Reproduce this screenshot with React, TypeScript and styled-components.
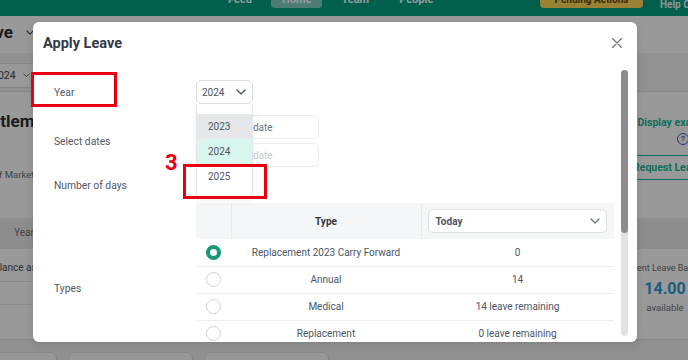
import React from "react";
import styled, { createGlobalStyle } from "styled-components";

const GlobalStyle = createGlobalStyle`
  html, body { margin: 0; padding: 0; }
  body { font-family: Roboto, "Liberation Sans", Arial, sans-serif; background: #fff; }
  * { box-sizing: border-box; }
`;

const Screen = styled.div`
  position: relative;
  width: 688px;
  height: 360px;
  overflow: hidden;
  background: #fff;
`;

/* ---------- background page ---------- */
const Page = styled.div`
  display: flex;
  flex-direction: column;
  width: 688px;
  height: 360px;
`;

const TopNav = styled.header`
  height: 33px;
  margin-top: -17px;
  flex-shrink: 0;
  background: #00a07f;
  display: flex;
  align-items: center;
  padding-left: 217px;
  color: #fff;
`;

const NavItem = styled.div<{ $active?: boolean }>`
  height: 16px;
  padding: 0 11px;
  margin-right: 8px;
  border-radius: 4px;
  font-size: 11px;
  font-weight: 700;
  line-height: 16px;
  background: ${(p) => (p.$active ? "rgba(255,255,255,0.5)" : "transparent")};
`;

const GoldButton = styled.div`
  margin-left: auto;
  width: 103px;
  height: 16px;
  border-radius: 4px;
  background: #ffd95a;
  color: #5a4a10;
  font-size: 10px;
  font-weight: 700;
  line-height: 16px;
  text-align: center;
`;

const HelpLink = styled.div`
  align-self: flex-end;
  width: 28px;
  margin-left: 17px;
  padding-bottom: 6px;
  font-size: 10px;
  font-weight: 700;
  line-height: 10px;
  white-space: nowrap;
  color: #eef7f4;
`;

const Row = styled.div<{ $h: number; $bg?: string; $line?: boolean }>`
  height: ${(p) => p.$h}px;
  flex-shrink: 0;
  display: flex;
  justify-content: space-between;
  background: ${(p) => p.$bg || "#fff"};
  border-bottom: ${(p) => (p.$line ? "1px solid #e2e2e2" : "none")};
`;

const LeftCol = styled.div<{ $pl?: number; $pt?: number }>`
  margin-left: -29px;
  width: 220px;
  padding-left: ${(p) => p.$pl || 0}px;
  padding-top: ${(p) => p.$pt || 0}px;
  display: flex;
  flex-direction: column;
  white-space: nowrap;
`;

const RightCol = styled.div<{ $pt?: number; $mr?: number }>`
  width: 112px;
  margin-right: ${(p) => -(p.$mr ?? 44)}px;
  padding-top: ${(p) => p.$pt || 0}px;
  display: flex;
  flex-direction: column;
  align-items: center;
  white-space: nowrap;
`;

const PageTitle = styled.div`
  display: flex;
  align-items: center;
  gap: 13px;
  padding: 6px 0 0 0;
  margin-left: -3px;
  font-size: 17px;
  font-weight: 700;
  color: #2b2f36;
`;

const GhostSelect = styled.div`
  margin: 10px 0 0 12px;
  width: 55px;
  height: 25px;
  border: 1px solid #dcdcdc;
  border-radius: 4px;
  background: #fff;
  display: flex;
  align-items: center;
  justify-content: space-between;
  padding: 0 7px 0 8px;
  font-size: 10.5px;
  color: #444;
`;

const SectionTitle = styled.div`
  font-size: 17px;
  font-weight: 700;
  line-height: 20px;
  color: #2b2f36;
`;

const Muted = styled.div<{ $mt?: number; $ml?: number; $size?: number }>`
  margin-top: ${(p) => p.$mt || 0}px;
  margin-left: ${(p) => p.$ml || 0}px;
  font-size: ${(p) => p.$size || 10}px;
  line-height: 12px;
  color: #6b6f76;
`;

const TealLink = styled.div`
  font-size: 10.5px;
  font-weight: 700;
  line-height: 13px;
  color: #18b894;
`;

const HelpDot = styled.span`
  margin-top: 4px;
  margin-left: 14px;
  width: 12px;
  height: 12px;
  border: 1.5px solid #4a5bd0;
  border-radius: 50%;
  font-size: 8px;
  font-weight: 700;
  line-height: 9px;
  text-align: center;
  color: #4a5bd0;
`;

const OutlineButton = styled.div`
  margin-top: 10px;
  align-self: stretch;
  height: 25px;
  border: 1px solid #18b894;
  border-radius: 4px;
  display: flex;
  align-items: center;
  padding-left: 12px;
  font-size: 10.5px;
  font-weight: 700;
  color: #18b894;
`;

const BalanceCell = styled.div<{ $h: number }>`
  height: ${(p) => p.$h}px;
  border-bottom: 1px solid #e4e4e4;
  padding: 13px 0 0 17px;
  font-size: 10px;
  color: #4a4f57;
`;

const BigNumber = styled.div`
  margin-top: 5px;
  font-size: 16px;
  font-weight: 700;
  line-height: 20px;
  color: #2a9bd8;
`;

const CardsRow = styled.div`
  flex: 1;
  background: #f0f0f0;
  display: flex;
  gap: 11px;
  padding-top: 12px;
  margin-left: -68px;
`;

const GhostCard = styled.div`
  width: 125px;
  height: 40px;
  border: 1px solid #e0e0e0;
  border-radius: 6px;
  background: #fbfbfb;
  flex-shrink: 0;
`;

const Overlay = styled.div`
  position: absolute;
  inset: 0;
  background: rgba(0, 0, 0, 0.4);
`;

/* ---------- modal ---------- */
const Modal = styled.div`
  position: absolute;
  left: 33px;
  top: 22px;
  width: 604px;
  height: 320px;
  background: #fff;
  border-radius: 6px;
  display: flex;
  flex-direction: column;
  overflow: hidden;
  box-shadow: 0 2px 10px rgba(0, 0, 0, 0.12);
`;

const ModalHeader = styled.div`
  height: 42px;
  flex-shrink: 0;
  display: flex;
  align-items: center;
  justify-content: space-between;
  padding: 0 15px 0 10px;
`;

const Title = styled.h2`
  margin: 0;
  font-size: 14.5px;
  font-weight: 700;
  color: #343a46;
`;

const CloseButton = styled.button`
  border: 0;
  background: none;
  padding: 0;
  width: 10px;
  height: 10px;
  display: flex;
  color: #6b7280;
`;

const ModalBody = styled.div`
  flex: 1;
  min-height: 0;
  display: flex;
`;

const ScrollArea = styled.div`
  flex: 1;
  overflow: hidden;
  padding: 16px 0 0 21px;
`;

const ScrollTrack = styled.div`
  width: 7px;
  margin: 6px 9px 6px 7px;
  border-radius: 4px;
  background: #e2e2e2;
  display: flex;
  flex-direction: column;
`;

const ScrollThumb = styled.div`
  height: 163px;
  border-radius: 4px;
  background: #8c8c8c;
`;

const FormGrid = styled.div`
  display: grid;
  grid-template-columns: 142px 418px;
  row-gap: 11px;
  align-items: center;
`;

const Label = styled.div`
  font-size: 10.3px;
  color: #4f5866;
`;

const Field = styled.div<{ $h?: number }>`
  position: relative;
  min-height: ${(p) => p.$h || 0}px;
`;

const SelectBox = styled.div<{ $w?: number }>`
  width: ${(p) => (p.$w ? `${p.$w}px` : "100%")};
  height: 24px;
  border: 1px solid #dcdfe4;
  border-radius: 5px;
  background: #fff;
  display: flex;
  align-items: center;
  justify-content: space-between;
  padding: 0 6px 0 5px;
  font-size: 10px;
  color: #4b5563;
`;

const Menu = styled.div`
  position: absolute;
  top: 24px;
  left: 0;
  width: 57px;
  z-index: 2;
  background: #fff;
  border: 1px solid #e3e5e8;
  border-top: none;
  border-radius: 0 0 5px 5px;
  padding: 10px 0 8px;
  box-shadow: 0 3px 6px rgba(0, 0, 0, 0.06);
`;

const MenuOption = styled.div<{ $state?: "hover" | "selected" }>`
  height: 25px;
  line-height: 25px;
  padding-left: 11px;
  font-size: 10px;
  color: #4b5563;
  background: ${(p) =>
    p.$state === "hover" ? "#e5e7ea" : p.$state === "selected" ? "#d8f5ee" : "#fff"};
`;

const DateStack = styled.div`
  display: flex;
  flex-direction: column;
  gap: 4px;
`;

const DateInput = styled.div<{ $muted?: boolean }>`
  width: 123px;
  height: 24px;
  border: 1px solid #ececec;
  border-radius: 5px;
  padding-left: 26px;
  display: flex;
  align-items: center;
  font-size: 10px;
  color: ${(p) => (p.$muted ? "#c3c7cd" : "#6b7280")};
`;

const Table = styled.table`
  width: 418px;
  border-collapse: collapse;
  font-size: 10px;
  color: #4b5563;
`;

const HeadCell = styled.th<{ $w?: number; $divider?: boolean }>`
  height: 36px;
  padding: 0;
  width: ${(p) => (p.$w ? `${p.$w}px` : "auto")};
  background: #f5f6f7;
  border-left: ${(p) => (p.$divider ? "1px solid #e7e9ec" : "none")};
  font-weight: 700;
  color: #30353d;
  text-align: center;
`;

const HeadSelectWrap = styled.div`
  padding: 0 7px 0 6px;
`;

const Cell = styled.td`
  height: 27px;
  padding: 0;
  border-bottom: 1px solid #eceef1;
  text-align: center;
  vertical-align: middle;
`;

const Radio = styled.span<{ $checked?: boolean }>`
  display: inline-block;
  vertical-align: middle;
  width: 15px;
  height: 15px;
  border-radius: 50%;
  border: ${(p) => (p.$checked ? "4px solid #16987a" : "1.5px solid #cfd3d8")};
  background: #fff;
`;

/* ---------- annotations ---------- */
const RedBox = styled.div<{ $x: number; $y: number; $w: number; $h: number }>`
  position: absolute;
  left: ${(p) => p.$x}px;
  top: ${(p) => p.$y}px;
  width: ${(p) => p.$w}px;
  height: ${(p) => p.$h}px;
  border: 3px solid #e60012;
  z-index: 5;
`;

const StepNumber = styled.div`
  position: absolute;
  left: 165px;
  top: 152px;
  font-size: 22px;
  font-weight: 700;
  line-height: 22px;
  color: #e60012;
  z-index: 5;
`;

const Chevron = ({ w = 10, color = "currentColor" }: { w?: number; color?: string }) => (
  <svg width={w} height={w / 2 + 1} viewBox="0 0 10 6" fill="none">
    <polyline points="1,1 5,5 9,1" stroke={color} strokeWidth="1.3" strokeLinecap="round" strokeLinejoin="round" />
  </svg>
);

const rows = [
  { type: "Replacement 2023 Carry Forward", value: "0", checked: true },
  { type: "Annual", value: "14" },
  { type: "Medical", value: "14 leave remaining" },
  { type: "Replacement", value: "0 leave remaining" },
  { type: "Unpaid", value: "Unlimited" },
];

export default function App() {
  return (
    <Screen>
      <GlobalStyle />
      <Page>
        <TopNav>
          <NavItem>Feed</NavItem>
          <NavItem $active>Home</NavItem>
          <NavItem>Team</NavItem>
          <NavItem>People</NavItem>
          <GoldButton>Pending Actions</GoldButton>
          <HelpLink>Help Center</HelpLink>
        </TopNav>
        <Row $h={37}>
          <LeftCol>
            <PageTitle>
              Leave <Chevron w={8} color="#444" />
            </PageTitle>
          </LeftCol>
        </Row>
        <Row $h={39} $bg="#f2f2f2" $line>
          <LeftCol>
            <GhostSelect>
              2024 <Chevron w={7} color="#555" />
            </GhostSelect>
          </LeftCol>
        </Row>
        <Row $h={126}>
          <LeftCol $pt={19}>
            <SectionTitle>Entitlement</SectionTitle>
            <Muted $mt={38} $ml={-2} $size={9.5}>Head of Marketing</Muted>
          </LeftCol>
          <RightCol $pt={24}>
            <TealLink>Display example</TealLink>
            <HelpDot>?</HelpDot>
            <OutlineButton>Request Leave</OutlineButton>
          </RightCol>
        </Row>
        <Row $h={31} $bg="#ebebeb">
          <LeftCol $pl={43} $pt={9}>
            <Muted>Year</Muted>
          </LeftCol>
        </Row>
        <Row $h={91} $line>
          <LeftCol>
            <BalanceCell $h={33}>Balance as at today</BalanceCell>
            <BalanceCell $h={23} />
          </LeftCol>
          <RightCol $pt={13} $mr={33}>
            <Muted $size={9}>Current Leave Balance</Muted>
            <BigNumber>14.00</BigNumber>
            <Muted $mt={3} $size={9.5}>available</Muted>
          </RightCol>
        </Row>
        <CardsRow>
          <GhostCard />
          <GhostCard />
          <GhostCard />
        </CardsRow>
      </Page>

      <Overlay />

      <Modal>
        <ModalHeader>
          <Title>Apply Leave</Title>
          <CloseButton aria-label="Close">
            <svg width="10" height="10" viewBox="0 0 10 10">
              <path d="M0.5 0.5 L9.5 9.5 M9.5 0.5 L0.5 9.5" stroke="currentColor" strokeWidth="1.2" strokeLinecap="round" />
            </svg>
          </CloseButton>
        </ModalHeader>
        <ModalBody>
          <ScrollArea>
            <FormGrid>
              <Label>Year</Label>
              <Field>
                <SelectBox $w={57}>
                  2024 <Chevron w={10} color="#4b5563" />
                </SelectBox>
                <Menu>
                  <MenuOption $state="hover">2023</MenuOption>
                  <MenuOption $state="selected">2024</MenuOption>
                  <MenuOption>2025</MenuOption>
                </Menu>
              </Field>

              <Label>Select dates</Label>
              <Field>
                <DateStack>
                  <DateInput>Select date</DateInput>
                  <DateInput $muted>Select date</DateInput>
                </DateStack>
              </Field>

              <Label>Number of days</Label>
              <Field $h={14} />

              <Label>Types</Label>
              <Field>
                <Table>
                  <thead>
                    <tr>
                      <HeadCell $w={35} />
                      <HeadCell $w={190} $divider>
                        Type
                      </HeadCell>
                      <HeadCell $divider>
                        <HeadSelectWrap>
                          <SelectBox>
                            <span style={{ paddingLeft: 2 }}>Today</span>
                            <Chevron w={10} color="#6b7280" />
                          </SelectBox>
                        </HeadSelectWrap>
                      </HeadCell>
                    </tr>
                  </thead>
                  <tbody>
                    {rows.map((r) => (
                      <tr key={r.type}>
                        <Cell>
                          <Radio $checked={r.checked} />
                        </Cell>
                        <Cell>{r.type}</Cell>
                        <Cell>{r.value}</Cell>
                      </tr>
                    ))}
                  </tbody>
                </Table>
              </Field>
            </FormGrid>
          </ScrollArea>
          <ScrollTrack>
            <ScrollThumb />
          </ScrollTrack>
        </ModalBody>
      </Modal>

      <RedBox $x={31} $y={72} $w={86} $h={35} />
      <RedBox $x={183} $y={164} $w={84} $h={35} />
      <StepNumber>3</StepNumber>
    </Screen>
  );
}
